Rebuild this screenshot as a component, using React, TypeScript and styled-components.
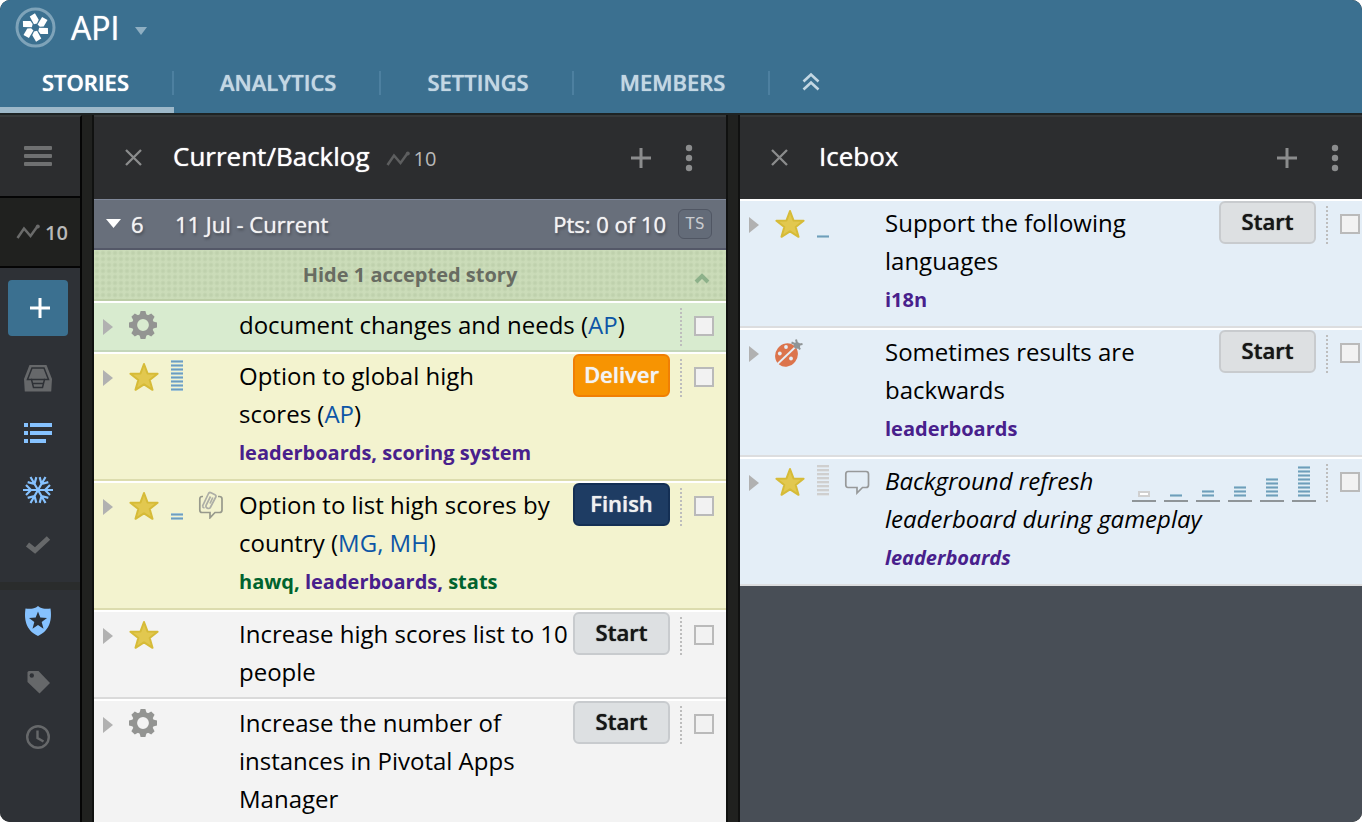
import React from "react";
import styled, { createGlobalStyle, css } from "styled-components";

/* ---------- theme values ---------- */

const color = {
  brand: "#3b7090",
  ink: "#20211f",
  panelHead: "#2c2d2f",
  link: "#0d56a6",
  label: "#48208c",
  epic: "#00632e",
};

const GlobalStyle = createGlobalStyle`
  *, *::before, *::after { box-sizing: border-box; }
  body {
    margin: 0;
    background: #fff;
    font-family: "Open Sans", "Noto Sans", sans-serif;
    font-size: 24px;
    color: #000;
  }
  button { font: inherit; color: inherit; background: none; border: 0; padding: 0; cursor: pointer; }
  h1, h2, h3, ul, p { margin: 0; padding: 0; font-weight: 400; }
  ul { list-style: none; }
  a { color: inherit; text-decoration: none; }
  svg { display: block; }
`;

const Page = styled.div`
  height: 100vh;
  display: flex;
  flex-direction: column;
  overflow: hidden;
  border-radius: 10px;
  background: ${color.ink};
`;

/* ---------- page header ---------- */

const Header = styled.header`
  flex: none;
  background: ${color.brand};
  color: #fff;
  border-bottom: 2px solid #1d2324;
`;

const ProjectBar = styled.div`
  display: flex;
  align-items: center;
  height: 55px;
  padding-left: 15px;
`;

const ProjectName = styled.h1`
  margin-left: 15px;
  font-size: 32px;
  line-height: 40px;
  text-shadow: 0 0 1px #fff;
`;

const ProjectMenu = styled.button`
  margin-left: 16px;
  padding-top: 7px;
`;

const Tabs = styled.nav`
  display: flex;
  align-items: stretch;
  height: 58px;
`;

const Tab = styled.a<{ $active?: boolean }>`
  position: relative;
  display: flex;
  align-items: center;
  padding: 0 45px 5px 46px;
  font-size: 22px;
  font-weight: 600;
  color: ${(p) => (p.$active ? "#fff" : "#c3d7e3")};
  text-shadow: 0 0 1px currentColor;

  &:first-child { padding-left: 42px; }

  &::after {
    content: "";
    position: absolute;
    right: 0;
    top: 16px;
    width: 2px;
    height: 24px;
    background: #4d80a0;
  }

  ${(p) =>
    p.$active &&
    css`
      box-shadow: inset 0 -6px 0 #9db8c9;
    `}
`;

const CollapseTabs = styled.button`
  padding: 0 32px 4px;
`;

/* ---------- board ---------- */

const Board = styled.div`
  flex: 1;
  min-height: 0;
  display: flex;
  gap: 10px;
  overflow: hidden;
`;

const Sidebar = styled.aside`
  flex: none;
  width: 82px;
  display: flex;
  flex-direction: column;
  background: #2e3136;
  border-right: 2px solid #050505;
  border-top: 2px solid #36393a;
`;

const SideToggle = styled.button`
  display: flex;
  align-items: center;
  height: 81px;
  padding-left: 24px;
  background: ${color.panelHead};
  border-bottom: 2px solid #050505;
`;

const SideVelocity = styled.button`
  display: flex;
  align-items: center;
  gap: 5px;
  height: 70px;
  padding-left: 16px;
  background: ${color.ink};
  border-bottom: 2px solid #050505;
  font-size: 20px;
  font-weight: 600;
  color: #b9b9b9;
`;

const AddStory = styled.button`
  display: grid;
  place-items: center;
  width: 60px;
  height: 56px;
  margin: 12px 0 14px 8px;
  padding-left: 3px;
  border-radius: 4px;
  background: ${color.brand};
`;

const SideGroup = styled.div`
  display: flex;
  flex-direction: column;

  & + & {
    margin-top: 8px;
    border-top: 8px solid #2a2c2c;
    padding-top: 2px;
  }
`;

const SideItem = styled.button<{ $tall?: boolean }>`
  height: ${(p) => (p.$tall ? 58 : 56)}px;
  padding-left: 22px;
`;

const Panel = styled.section<{ $bg: string }>`
  flex: 1 0 636px;
  display: flex;
  flex-direction: column;
  border: solid #101110;
  border-width: 0 2px;
  background: ${(p) => p.$bg};
`;

const PanelHeader = styled.header`
  flex: none;
  display: flex;
  align-items: center;
  height: 84px;
  padding: 0 33px 1px 31px;
  border-top: 2px solid #36393a;
  background: ${color.panelHead};
  color: #fff;
`;

const PanelTitle = styled.h2`
  margin-left: 31px;
  padding-bottom: 3px;
  font-size: 26px;
  line-height: 36px;
  text-shadow: 0 0 1px #fff;
`;

const Velocity = styled.span`
  display: flex;
  align-items: center;
  gap: 4px;
  margin-left: 16px;
  padding-top: 2px;
  font-size: 20px;
  color: #b9b9b9;
`;

const PanelActions = styled.div`
  display: flex;
  align-items: center;
  gap: 34px;
  margin-left: auto;
`;

const Iteration = styled.div`
  flex: none;
  display: flex;
  align-items: center;
  height: 51px;
  padding: 0 14px 1px 12px;
  border-top: 1px solid #7f8798;
  border-bottom: 2px solid #545868;
  background: #686f7b;
  color: #f3f3f3;
  font-size: 22px;
  text-shadow: 0 0 1px #f3f3f3, 1px 2px 3px rgba(0, 0, 0, 0.4);
`;

const IterationToggle = styled.button`
  display: flex;
  align-items: center;
  gap: 10px;
  width: 69px;
  text-shadow: inherit;
`;

const IterationPoints = styled.span`
  margin-left: auto;
`;

const TeamStrength = styled.button`
  width: 34px;
  height: 30px;
  margin-left: 12px;
  border: 1px solid #505663;
  border-radius: 6px;
  background: #636b78;
  font-family: "DejaVu Sans Mono", monospace;
  font-size: 16px;
  line-height: 26px;
  color: #c9ccd0;
  text-shadow: none;
`;

const AcceptedToggle = styled.button`
  flex: none;
  display: grid;
  grid-template-columns: 18px 1fr 18px;
  align-items: center;
  height: 51px;
  padding: 0 15px 1px 15px;
  border-bottom: 2px solid #bccda6;
  background:
    radial-gradient(circle at 3px 3px, #bfd1ad 1px, #cbdcb9 3px) 0 0 / 6px 6px;
  font-size: 20px;
  font-weight: 700;
  color: #686c62;

  span { grid-column: 2; }
  svg { margin-top: 8px; }
`;

/* ---------- stories ---------- */

type Tone = "accepted" | "started" | "unstarted" | "icebox";

const tones: Record<Tone, { bg: string; edge: string }> = {
  accepted: { bg: "#d8ebcf", edge: "#c4d6ba" },
  started: { bg: "#f3f3cf", edge: "#dcdcae" },
  unstarted: { bg: "#f3f3f3", edge: "#dadada" },
  icebox: { bg: "#e4eef7", edge: "#dcdddf" },
};

const StoryRow = styled.li<{ $tone: Tone; $draft?: boolean }>`
  display: grid;
  grid-template-columns: 35px 42px 27px 41px minmax(0, 1fr) 56px;
  align-items: start;
  padding-bottom: 6px;
  border-top: 2px solid #fff;
  border-bottom: 2px solid ${(p) => tones[p.$tone].edge};
  background: ${(p) => tones[p.$tone].bg};
  font-style: ${(p) => (p.$draft ? "italic" : "normal")};
`;

const Expander = styled.button`
  padding: 16px 0 0 9px;
`;

const TypeIcon = styled.span`
  padding-top: 8px;
`;

const PointsSlot = styled.span`
  display: flex;
  align-items: flex-end;
  height: 37px;
`;

const Bars = styled.span<{ $count: number; $muted?: boolean }>`
  display: block;
  width: 12px;
  height: ${(p) => p.$count * 4 - 1}px;
  background: ${(p) =>
    p.$muted
      ? "repeating-linear-gradient(to bottom, #cfcfcf 0 2px, #dfe4e8 2px 3px, transparent 3px 4px)"
      : "repeating-linear-gradient(to bottom, #9fc4d6 0 1px, #6f9dbb 1px 2px, #a3c4d3 2px 3px, transparent 3px 4px)"};
`;

const CommentSlot = styled.span`
  padding-top: 8px;
`;

const StoryBody = styled.div`
  min-width: 0;
`;

const StoryTitle = styled.h3`
  padding-top: 3px;
  font-size: 24px;
  line-height: 38px;
`;

const Owner = styled.a`
  color: ${color.link};
`;

const Unbroken = styled.span`
  white-space: nowrap;
`;

const Labels = styled.p`
  font-size: 20px;
  font-weight: 700;
  line-height: 40px;
`;

const Label = styled.a<{ $epic?: boolean }>`
  color: ${(p) => (p.$epic ? color.epic : color.label)};
`;

type Action = "Start" | "Finish" | "Deliver";

const actions: Record<Action, { bg: string; edge: string; fg: string }> = {
  Start: { bg: "#dde0e2", edge: "#c8cbce", fg: "#161616" },
  Finish: { bg: "#1e3c63", edge: "#142f54", fg: "#f0f0f0" },
  Deliver: { bg: "#f79402", edge: "#f07f04", fg: "#f3f3f3" },
};

const ActionButton = styled.button<{ $action: Action }>`
  float: right;
  width: 97px;
  height: 43px;
  margin-left: 2px;
  padding-bottom: 3px;
  border: 2px solid ${(p) => actions[p.$action].edge};
  border-radius: 6px;
  background: ${(p) => actions[p.$action].bg};
  color: ${(p) => actions[p.$action].fg};
  font-size: 22px;
  font-weight: 600;
  line-height: 36px;
  text-shadow: 0 0 1px currentColor;
`;

const Estimates = styled.div`
  float: right;
  display: flex;
  gap: 8px;
  height: 38px;
  margin-bottom: -4px;
  padding-top: 6px;
  margin-left: 6px;
`;

const Estimate = styled.button`
  display: flex;
  align-items: flex-end;
  justify-content: center;
  width: 24px;
  height: 37px;
  padding-bottom: 3px;
  border-bottom: 2px solid #8f9599;
`;

const ZeroPoints = styled.span`
  width: 12px;
  height: 6px;
  border: 2px solid #d0d0d0;
  background: #fff;
`;

const Select = styled.label`
  display: block;
  height: 38px;
  margin: 5px 0 -2px 10px;
  padding: 8px 12px 0 14px;
  background: repeating-linear-gradient(to bottom, #bdbdbd 0 2px, transparent 2px 4px) 0 0 / 2px 100% no-repeat;
`;

const Tick = styled.input`
  appearance: none;
  display: block;
  width: 20px;
  height: 20px;
  margin: 0;
  border: 2px solid #bababa;
  background: #f2f2f2;
`;

/* ---------- drawings ---------- */

const Logo = () => (
  <svg width="41" height="41" viewBox="-20.5 -20.5 41 41" aria-hidden="true">
    <circle r="18.5" fill="none" stroke="#7ea3b9" strokeWidth="3" />
    {[0, 60, 120, 180, 240, 300].map((a) => (
      <path key={a} d="M3.600 .300L12.400 .500L12.600 6.600L5 6.600L2.800 3.400Z" fill="#fff" transform={`rotate(${a})`} />
    ))}
  </svg>
);

const Triangle = ({ fill, down }: { fill: string; down?: boolean }) =>
  down ? (
    <svg width="12" height="8" aria-hidden="true">
      <path d="M0 0H12L6 8Z" fill={fill} />
    </svg>
  ) : (
    <svg width="10" height="16" aria-hidden="true">
      <path d="M0 0L10 8L0 16Z" fill={fill} />
    </svg>
  );

const Pulse = ({ stroke = "#5d5e5f" }: { stroke?: string }) => (
  <svg width="24" height="16" aria-hidden="true">
    <path d="M1.500 14L8 4.500L14.500 12L21 3" fill="none" stroke={stroke} strokeWidth="2.500" />
    <circle cx="21.800" cy="2.500" r="2" fill={stroke} />
  </svg>
);

const Cross = () => (
  <svg width="17" height="17" aria-hidden="true">
    <path d="M1 1L16 16M16 1L1 16" stroke="#8b8c8d" strokeWidth="2.300" />
  </svg>
);

const Plus = ({ stroke = "#8b8c8d", width = 3 }: { stroke?: string; width?: number }) => (
  <svg width="20" height="20" aria-hidden="true">
    <path d="M10 0V20M0 10H20" stroke={stroke} strokeWidth={width} />
  </svg>
);

const Dots = () => (
  <svg width="8" height="28" aria-hidden="true" fill="#8b8c8d">
    <circle cx="4" cy="4" r="3.200" />
    <circle cx="4" cy="14" r="3.200" />
    <circle cx="4" cy="24" r="3.200" />
  </svg>
);

const Star = () => (
  <svg width="30" height="30" viewBox="0 0 30 30" aria-hidden="true">
    <path
      d="M15 2L18.500 11.400L28.600 11.800L20.700 18L23.500 27.800L15 22.300L6.500 27.800L9.300 18L1.400 11.800L11.500 11.400Z"
      fill="#e2c84f"
      stroke="#d6bb38"
      strokeWidth="2"
      strokeLinejoin="round"
    />
  </svg>
);

const Gear = () => (
  <svg width="28" height="28" viewBox="-14 -14 28 28" aria-hidden="true">
    <circle r="8.400" fill="none" stroke="#939492" strokeWidth="5" />
    {[0, 45, 90, 135, 180, 225, 270, 315].map((a) => (
      <path key={a} d="M-3.500 -10L-2.400 -14H2.400L3.500 -10Z" fill="#939492" transform={`rotate(${a})`} />
    ))}
  </svg>
);

const Bug = () => (
  <svg width="30" height="30" viewBox="0 0 30 30" aria-hidden="true">
    <ellipse cx="11.500" cy="17" rx="11" ry="12" transform="rotate(38 11.500 17)" fill="#dc744c" />
    <path d="M2.500 26L22 7.500" stroke="#e4eef7" strokeWidth="1.800" />
    <g fill="#e4eef7">
      <circle cx="11" cy="9" r="1.900" />
      <circle cx="4.800" cy="15.500" r="1.900" />
      <circle cx="16" cy="20.500" r="1.900" />
    </g>
    <path d="M16.500 4.500L22 7L27.500 6M21 1.500L22.500 7L25 11.500" stroke="#8f9496" strokeWidth="2" fill="none" />
    <circle cx="22" cy="7.500" r="3.200" fill="#8f9496" />
  </svg>
);

const Comment = () => (
  <svg width="26" height="28" viewBox="0 0 26 28" aria-hidden="true">
    <path
      d="M4 4.500H22C23.500 4.500 24.500 5.500 24.500 7V18C24.500 19.500 23.500 20.500 22 20.500H18.500L13 26V20.500H4C2.500 20.500 1.800 19.500 1.800 18V7C1.800 5.500 2.500 4.500 4 4.500Z"
      fill="none"
      stroke="#97999a"
      strokeWidth="1.700"
    />
  </svg>
);

const CommentClip = () => (
  <svg width="26" height="28" viewBox="0 0 26 28" aria-hidden="true" fill="none">
    <path
      d="M5 5.500H4C2.500 5.500 1.800 6.500 1.800 8V19C1.800 20.500 2.500 21.500 4 21.500H12V26.800L17 21.500H21.500C23 21.500 24 20.500 24 19V8C24 6.500 23 5.500 21.500 5.500H20"
      stroke="#97998c"
      strokeWidth="1.700"
    />
    <path
      d="M4.500 15.200L10.500 2.500C11 1.500 12 1.300 13 1.800L17 3.700C18 4.300 18.300 5 17.800 6L12.300 16.500C11.500 17.900 10 17.600 9 17C8 16.400 7.600 15.500 8.200 14.200L12.500 5.500M4.500 15.200C4.800 16.300 5.500 16.800 6.500 17M12 12.500L14.800 6.500"
      stroke="#adaea6"
      strokeWidth="1.700"
    />
  </svg>
);

const Menu = () => (
  <svg width="28" height="21" aria-hidden="true" fill="#6f7071">
    <rect width="28" height="4" y="0" rx="1" />
    <rect width="28" height="4" y="8" rx="1" />
    <rect width="28" height="4" y="16" rx="1" />
  </svg>
);

const Inbox = () => (
  <svg width="32" height="32" viewBox="0 0 32 32" aria-hidden="true">
    <path d="M7.500 3H24.500L30 17L29.200 29.500H2.800L2 17Z" fill="#66686a" />
    <path d="M10 6H22L26.500 17.500H22.500L20.500 25.500H11.500L9.500 17.500H5.500Z" fill="#66686a" stroke="#2e3136" strokeWidth="1.500" />
    <path d="M9 17.500H23M10 21.500H22" stroke="#2e3136" strokeWidth="1.500" />
  </svg>
);

const Backlog = () => (
  <svg width="32" height="32" viewBox="0 0 32 32" aria-hidden="true" fill="#86c2ff">
    <path d="M2 5h4v4H2zM8 5h22v4H8zM2 13h4v4H2zM8 13h22v4H8zM2 21h4v4H2zM8 21h16v4H8z" />
  </svg>
);

const Snow = () => (
  <svg width="32" height="32" viewBox="-16 -16 32 32" aria-hidden="true" fill="none" stroke="#86c2ff" strokeWidth="2.200">
    {[0, 60, 120, 180, 240, 300].map((a) => (
      <path key={a} d="M0 0H15M7 0L12 -5M7 0L12 5" transform={`rotate(${a})`} />
    ))}
  </svg>
);

const Done = () => (
  <svg width="32" height="32" viewBox="0 0 32 32" aria-hidden="true">
    <path d="M5.500 14.500L13 20.500L26.500 8" fill="none" stroke="#66686a" strokeWidth="5" />
  </svg>
);

const Shield = () => (
  <svg width="32" height="32" viewBox="0 0 32 32" aria-hidden="true">
    <path d="M16 1L18 2.500C21 4 25 4 28.500 3.500C30 14 28.500 25 16 31C3.500 25 2 14 3.500 3.500C7 4 11 4 14 2.500Z" fill="#86c2ff" />
    <path d="M16 6.500L18.300 12.600L25 13L19.700 17.100L21.500 23.800L16 20L10.500 23.800L12.300 17.100L7 13L13.700 12.600Z" fill="#2a2f36" />
  </svg>
);

const Tag = () => (
  <svg width="32" height="32" viewBox="0 0 32 32" aria-hidden="true">
    <path d="M5.500 9.500Q5.500 8 7 8H16.500L28 20L17.500 30.500L5.500 19Z" fill="#66686a" />
    <circle cx="9.800" cy="12.500" r="2.200" fill="#2e3136" />
  </svg>
);

const Clock = () => (
  <svg width="32" height="32" viewBox="0 0 32 32" aria-hidden="true" fill="none" stroke="#66686a" strokeWidth="2.400">
    <circle cx="16" cy="16" r="10.800" />
    <path d="M15.500 9.500V17L21.500 20.500" />
  </svg>
);

const ChevronsUp = () => (
  <svg width="18" height="20" aria-hidden="true" fill="none" stroke="#c3d7e3" strokeWidth="2.600">
    <path d="M1.500 9.500L9 2.500L16.500 9.500M1.500 17.500L9 10.500L16.500 17.500" />
  </svg>
);

const ChevronUp = () => (
  <svg width="18" height="12" aria-hidden="true">
    <path d="M3 10L9 4L15 10" fill="none" stroke="#8db18a" strokeWidth="4" />
  </svg>
);

/* ---------- data ---------- */

interface Story {
  id: number;
  tone: Tone;
  type: "feature" | "chore" | "bug";
  title: string;
  owners?: string[];
  labels?: { text: string; epic?: boolean }[];
  points?: number;
  unestimated?: boolean;
  note?: "comment" | "attachment";
  action?: Action;
}

const backlog: Story[] = [
  { id: 1, tone: "accepted", type: "chore", title: "document changes and needs", owners: ["AP"] },
  {
    id: 2, tone: "started", type: "feature", title: "Option to global high scores", owners: ["AP"],
    labels: [{ text: "leaderboards" }, { text: "scoring system" }], points: 8, action: "Deliver",
  },
  {
    id: 3, tone: "started", type: "feature", title: "Option to list high scores by country", owners: ["MG", "MH"],
    labels: [{ text: "hawq", epic: true }, { text: "leaderboards" }, { text: "stats", epic: true }],
    points: 2, note: "attachment", action: "Finish",
  },
  { id: 4, tone: "unstarted", type: "feature", title: "Increase high scores list to 10 people", action: "Start" },
  { id: 5, tone: "unstarted", type: "chore", title: "Increase the number of instances in Pivotal Apps Manager", action: "Start" },
];

const icebox: Story[] = [
  {
    id: 6, tone: "icebox", type: "feature", title: "Support the following languages",
    labels: [{ text: "i18n" }], points: 1, action: "Start",
  },
  {
    id: 7, tone: "icebox", type: "bug", title: "Sometimes results are backwards",
    labels: [{ text: "leaderboards" }], action: "Start",
  },
  {
    id: 8, tone: "icebox", type: "feature", title: "Background refresh leaderboard during gameplay",
    labels: [{ text: "leaderboards" }], unestimated: true, note: "comment",
  },
];

const icons = { feature: <Star />, chore: <Gear />, bug: <Bug /> };

/* ---------- components ---------- */

const TitleText = ({ title, owners }: { title: string; owners?: string[] }) => {
  if (!owners) return <>{title}</>;
  const cut = title.lastIndexOf(" ") + 1;
  return (
    <>
      {title.slice(0, cut)}
      <Unbroken>
        {title.slice(cut)} (
        {owners.map((o, i) => (
          <Owner key={o} href="#">
            {o}
            {i < owners.length - 1 && ", "}
          </Owner>
        ))}
        )
      </Unbroken>
    </>
  );
};

const StoryItem = ({ story }: { story: Story }) => (
  <StoryRow $tone={story.tone} $draft={story.unestimated}>
    <Expander aria-label="Expand story">
      <Triangle fill="#b1b1b1" />
    </Expander>
    <TypeIcon>{icons[story.type]}</TypeIcon>
    <PointsSlot>
      {story.points && <Bars $count={story.points} />}
      {story.unestimated && <Bars $count={8} $muted />}
    </PointsSlot>
    <CommentSlot>
      {story.note === "comment" && <Comment />}
      {story.note === "attachment" && <CommentClip />}
    </CommentSlot>
    <StoryBody>
      {story.action && <ActionButton $action={story.action}>{story.action}</ActionButton>}
      {story.unestimated && (
        <Estimates>
          {[0, 1, 2, 3, 5, 8].map((n) => (
            <Estimate key={n} aria-label={`${n} points`}>
              {n === 0 ? <ZeroPoints /> : <Bars $count={n} />}
            </Estimate>
          ))}
        </Estimates>
      )}
      <StoryTitle>
        <TitleText title={story.title} owners={story.owners} />
      </StoryTitle>
      {story.labels && (
        <Labels>
          {story.labels.map((l, i, all) => (
            <React.Fragment key={l.text}>
              <Label href="#" $epic={l.epic}>
                {l.text}
                {i < all.length - 1 && ","}
              </Label>{" "}
            </React.Fragment>
          ))}
        </Labels>
      )}
    </StoryBody>
    <Select>
      <Tick type="checkbox" aria-label={`Select ${story.title}`} />
    </Select>
  </StoryRow>
);

const PanelTop = ({ title, velocity }: { title: string; velocity?: number }) => (
  <PanelHeader>
    <button aria-label="Close panel"><Cross /></button>
    <PanelTitle>{title}</PanelTitle>
    {velocity && (
      <Velocity>
        <Pulse />
        {velocity}
      </Velocity>
    )}
    <PanelActions>
      <button aria-label="Add story"><Plus /></button>
      <button aria-label="Panel actions"><Dots /></button>
    </PanelActions>
  </PanelHeader>
);

export default function App() {
  return (
    <Page>
      <GlobalStyle />
      <Header>
        <ProjectBar>
          <Logo />
          <ProjectName>API</ProjectName>
          <ProjectMenu aria-label="Switch project">
            <Triangle down fill="#8fafc2" />
          </ProjectMenu>
        </ProjectBar>
        <Tabs>
          <Tab href="#" $active>STORIES</Tab>
          <Tab href="#">ANALYTICS</Tab>
          <Tab href="#">SETTINGS</Tab>
          <Tab href="#">MEMBERS</Tab>
          <CollapseTabs aria-label="Collapse header"><ChevronsUp /></CollapseTabs>
        </Tabs>
      </Header>

      <Board>
        <Sidebar>
          <SideToggle aria-label="Toggle sidebar"><Menu /></SideToggle>
          <SideVelocity><Pulse stroke="#6a6b6a" />10</SideVelocity>
          <AddStory aria-label="Add story"><Plus stroke="#fff" /></AddStory>
          <SideGroup>
            <SideItem aria-label="My work"><Inbox /></SideItem>
            <SideItem aria-label="Current backlog"><Backlog /></SideItem>
            <SideItem aria-label="Icebox"><Snow /></SideItem>
            <SideItem aria-label="Done"><Done /></SideItem>
          </SideGroup>
          <SideGroup>
            <SideItem $tall aria-label="Epics"><Shield /></SideItem>
            <SideItem $tall aria-label="Labels"><Tag /></SideItem>
            <SideItem $tall aria-label="History"><Clock /></SideItem>
          </SideGroup>
        </Sidebar>

        <Panel $bg="#f3f3f3">
          <PanelTop title="Current/Backlog" velocity={10} />
          <Iteration>
            <IterationToggle aria-label="Collapse iteration 6">
              <svg width="15" height="9" aria-hidden="true"><path d="M0 0H15L7.500 9Z" fill="#fff" /></svg>
              6
            </IterationToggle>
            <span>11 Jul - Current</span>
            <IterationPoints>Pts: 0 of 10</IterationPoints>
            <TeamStrength>TS</TeamStrength>
          </Iteration>
          <AcceptedToggle>
            <span>Hide 1 accepted story</span>
            <ChevronUp />
          </AcceptedToggle>
          <ul>
            {backlog.map((s) => <StoryItem key={s.id} story={s} />)}
          </ul>
        </Panel>

        <Panel $bg="#484e56">
          <PanelTop title="Icebox" />
          <ul>
            {icebox.map((s) => <StoryItem key={s.id} story={s} />)}
          </ul>
        </Panel>
      </Board>
    </Page>
  );
}
